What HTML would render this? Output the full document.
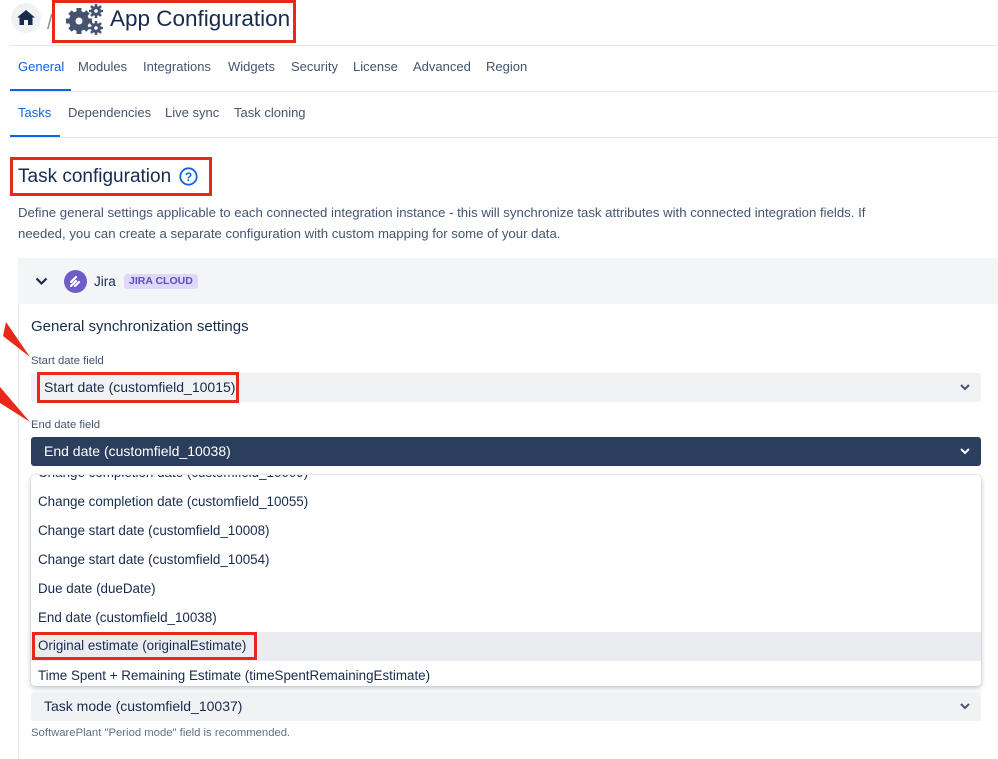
<!DOCTYPE html>
<html><head><meta charset="utf-8"><style>
*{box-sizing:border-box;margin:0;padding:0}
body{width:998px;height:759px;overflow:hidden;background:#fff;font-family:"Liberation Sans",sans-serif;color:#172b4d;position:relative}
.a{position:absolute;white-space:nowrap}
.red{position:absolute;border:3px solid #e8281b}
.tab{position:absolute;font-size:13px;color:#44546f}
.sel{position:absolute;left:31px;width:950px;height:29px;border-radius:3px;background:#f1f2f4;font-size:14px;padding:6px 13px}
.chev{position:absolute;right:10px;top:8px}
.item{position:absolute;left:31px;width:950px;height:29px;font-size:13.4px;padding:5px 7px;color:#172b4d}
</style></head><body>
<div class="a" style="left:11px;top:3px;width:30px;height:30px;border-radius:50%;background:#f1f2f4"></div>
<svg class="a" style="left:17px;top:10px" width="18" height="15" viewBox="0 0 18 15"><path d="M9 0L0 7.5h2.5V15h4.5v-5h4v5h4.5V7.5H18z" fill="#172b4d"/></svg>
<div class="a" style="left:47px;top:12px;font-size:20px;color:#8590a2">/</div>
<svg class="a" style="left:64px;top:3px" width="40" height="32" viewBox="0 0 40 32">
<g fill="#44546f"><circle cx="15" cy="18" r="10"/><g stroke="#44546f" stroke-width="5"><path d="M15 5v26M2 18h26M6 9l18 18M24 9L6 27"/></g><circle cx="15" cy="18" r="3.5" fill="#fff"/>
<circle cx="32" cy="8" r="5"/><path d="M32 1v14M25 8h14M27 3l10 10M37 3L27 13" stroke="#44546f" stroke-width="2.5"/><circle cx="32" cy="8" r="1.8" fill="#fff"/>
<circle cx="32" cy="25" r="5"/><path d="M32 18v14M25 25h14M27 20l10 10M37 20L27 30" stroke="#44546f" stroke-width="2.5"/><circle cx="32" cy="25" r="1.8" fill="#fff"/></g></svg>
<div class="a" style="left:110px;top:6px;font-size:22.5px;color:#172b4d">App Configuration</div>
<div class="red" style="left:52px;top:0;width:244px;height:43px"></div>
<div class="a" style="left:10px;top:45px;width:988px;height:1px;background:#e4e6ea"></div>
<div class="tab" style="left:18px;top:59px;color:#0c66e4">General</div>
<div class="tab" style="left:78px;top:59px">Modules</div>
<div class="tab" style="left:143px;top:59px">Integrations</div>
<div class="tab" style="left:228px;top:59px">Widgets</div>
<div class="tab" style="left:291px;top:59px">Security</div>
<div class="tab" style="left:353px;top:59px">License</div>
<div class="tab" style="left:413px;top:59px">Advanced</div>
<div class="tab" style="left:486px;top:59px">Region</div>
<div class="a" style="left:10px;top:89px;width:61px;height:2px;background:#0c66e4"></div>
<div class="a" style="left:10px;top:91px;width:988px;height:1px;background:#e4e6ea"></div>
<div class="tab" style="left:18px;top:105px;color:#0c66e4">Tasks</div>
<div class="tab" style="left:68px;top:105px">Dependencies</div>
<div class="tab" style="left:165px;top:105px">Live sync</div>
<div class="tab" style="left:234px;top:105px">Task cloning</div>
<div class="a" style="left:10px;top:135px;width:50px;height:2px;background:#0c66e4"></div>
<div class="a" style="left:10px;top:137px;width:988px;height:1px;background:#e4e6ea"></div>
<div class="a" style="left:18px;top:166px;font-size:19px">Task configuration</div>
<svg class="a" style="left:179px;top:167px" width="19" height="19" viewBox="0 0 19 19"><circle cx="9.5" cy="9.5" r="8.2" fill="none" stroke="#0c66e4" stroke-width="1.8"/><text x="9.5" y="14" font-size="12" font-weight="bold" text-anchor="middle" fill="#0c66e4" font-family="Liberation Sans">?</text></svg>
<div class="red" style="left:10px;top:157px;width:202px;height:39px"></div>
<div class="a" style="left:18px;top:202px;font-size:13.2px;color:#44546f;line-height:21px">Define general settings applicable to each connected integration instance - this will synchronize task attributes with connected integration fields. If<br>needed, you can create a separate configuration with custom mapping for some of your data.</div>
<div class="a" style="left:18px;top:258px;width:980px;height:46px;background:#f4f5f7"></div>
<div class="a" style="left:18px;top:304px;width:1px;height:455px;background:#e4e6ea"></div>
<svg class="a" style="left:35px;top:277px" width="13" height="9" viewBox="0 0 13 9"><path d="M1.5 1.5l5 5 5-5" fill="none" stroke="#172b4d" stroke-width="2.2"/></svg>
<div class="a" style="left:64px;top:270px;width:23px;height:23px;border-radius:50%;background:#6e5dc6"></div>
<svg class="a" style="left:68px;top:275px" width="15" height="13" viewBox="0 0 15 13"><path d="M3 11l5-5M3 7l5-5M7 11l4-4" stroke="#fff" stroke-width="2.2" stroke-linecap="round"/></svg>
<div class="a" style="left:94px;top:274px;font-size:13.5px">Jira</div>
<div class="a" style="left:124px;top:274px;height:15px;padding:0 5px;background:#dfd8fd;color:#5e4db2;font-size:10.5px;font-weight:bold;line-height:15px;border-radius:3px">JIRA CLOUD</div>
<div class="a" style="left:31px;top:318px;font-size:15px">General synchronization settings</div>
<div class="a" style="left:31px;top:355px;font-size:11.3px;color:#44546f">Start date field</div>
<div class="sel" style="top:373px">Start date (customfield_10015)<svg class="chev" width="12" height="12" viewBox="0 0 12 12"><path d="M2 4l4 4 4-4" fill="none" stroke="#44546f" stroke-width="2"/></svg></div>
<div class="red" style="left:37px;top:372px;width:202px;height:31px"></div>
<div class="a" style="left:31px;top:419px;font-size:11.3px;color:#44546f">End date field</div>
<div class="sel" style="top:437px;background:#2c3e5d;color:#fff">End date (customfield_10038)<svg class="chev" width="12" height="12" viewBox="0 0 12 12"><path d="M2 4l4 4 4-4" fill="none" stroke="#fff" stroke-width="2"/></svg></div>
<div class="a" style="left:31px;top:475px;width:950px;height:211px;background:#fff;border-radius:4px;box-shadow:0 2px 6px rgba(9,30,66,.25),0 0 1px rgba(9,30,66,.3);overflow:hidden">
<div class="item" style="left:0;top:-15px">Change completion date (customfield_10009)</div>
<div class="item" style="left:0;top:14px">Change completion date (customfield_10055)</div>
<div class="item" style="left:0;top:43px">Change start date (customfield_10008)</div>
<div class="item" style="left:0;top:72px">Change start date (customfield_10054)</div>
<div class="item" style="left:0;top:101px">Due date (dueDate)</div>
<div class="item" style="left:0;top:130px">End date (customfield_10038)</div>
<div class="item" style="left:0;top:157px;background:#ebecf0;padding-top:6px">Original estimate (originalEstimate)</div>
<div class="item" style="left:0;top:188px">Time Spent + Remaining Estimate (timeSpentRemainingEstimate)</div>
</div>
<div class="red" style="left:32px;top:632px;width:225px;height:28px"></div>
<div class="sel" style="top:692px">Task mode (customfield_10037)<svg class="chev" width="12" height="12" viewBox="0 0 12 12"><path d="M2 4l4 4 4-4" fill="none" stroke="#44546f" stroke-width="2"/></svg></div>
<div class="a" style="left:31px;top:727px;font-size:11.3px;color:#626f86">SoftwarePlant "Period mode" field is recommended.</div>
<svg class="a" style="left:0;top:320px" width="34" height="110" viewBox="0 0 34 110"><path d="M6 2L30 37L3 16z" fill="#e8281b"/><path d="M0 67L30 102L0 83z" fill="#e8281b"/></svg>
</body></html>
